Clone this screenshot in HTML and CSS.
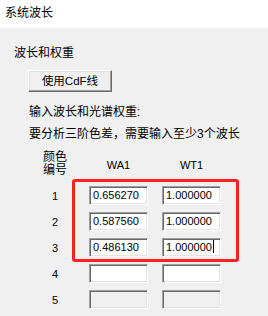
FILE: index.html
```html
<!DOCTYPE html>
<html>
<head>
<meta charset="utf-8">
<link rel="stylesheet" href="styles.css">
</head>
<body>
<div class="page">
  <div class="titlebar">系统波长</div>
  <div class="content">
    <div class="group-title">波长和权重</div>
    <div class="btn">使用CdF线</div>
    <div class="line line1">输入波长和光谱权重:</div>
    <div class="line line2">要分析三阶色差，需要输入至少3个波长</div>
    <div class="table">
      <div class="hdr-label">颜色<br>编号</div>
      <div class="hdr">WA1</div>
      <div class="hdr">WT1</div>

      <div class="num">1</div>
      <div class="field">0.656270</div>
      <div class="field">1.000000</div>

      <div class="num">2</div>
      <div class="field">0.587560</div>
      <div class="field">1.000000</div>

      <div class="num">3</div>
      <div class="field">0.486130</div>
      <div class="field">1.000000<span class="caret"></span></div>

      <div class="num">4</div>
      <div class="field"></div>
      <div class="field"></div>

      <div class="num">5</div>
      <div class="field disabled"></div>
      <div class="field disabled"></div>
    </div>
  </div>
  <div class="highlight"></div>
</div>
</body>
</html>
```
FILE: styles.css
```css
html, body {
  margin: 0;
  padding: 0;
}
body {
  width: 268px;
  height: 316px;
  overflow: hidden;
  background: #f0f0f0;
  font-family: "Liberation Sans", "Noto Sans CJK SC", sans-serif;
  font-size: 12px;
  color: #000;
}
.page {
  position: relative;
  height: 316px;
}
.titlebar {
  height: 28px;
  box-sizing: border-box;
  background: #fff;
  padding: 6px 0 0 5px;
  line-height: 14px;
}
.content {
  padding: 18px 0 0 14px;
}
.group-title {
  line-height: 14px;
}
.btn {
  margin-top: 10px;
  margin-left: 14px;
  width: 84px;
  height: 22px;
  box-sizing: border-box;
  background: #f0f0f0;
  border-top: 1px solid #fff;
  border-left: 1px solid #fff;
  border-right: 1px solid #696969;
  border-bottom: 1px solid #696969;
  box-shadow: inset -1px -1px 0 #a0a0a0, inset 1px 1px 0 #e3e3e3;
  font-size: 11.5px;
  line-height: 20px;
  text-align: center;
}
.line {
  padding-left: 15px;
  line-height: 14px;
}
.line1 {
  margin-top: 13px;
}
.line2 {
  margin-top: 8px;
}
.table {
  margin-top: 10px;
  margin-left: 21px;
  display: grid;
  grid-template-columns: 40px 59px 59px;
  column-gap: 14px;
  row-gap: 7px;
  align-items: center;
}
.hdr-label {
  line-height: 13px;
  text-align: center;
  margin-bottom: 2px;
}
.hdr {
  font-size: 11px;
  text-align: center;
  color: #000;
}
.num {
  font-size: 11px;
  text-align: center;
}
.field {
  height: 19px;
  box-sizing: border-box;
  background: #fff;
  border-top: 1px solid #a0a0a0;
  border-left: 1px solid #a0a0a0;
  border-right: 1px solid #fff;
  border-bottom: 1px solid #fff;
  box-shadow: inset 1px 1px 0 #696969, inset -1px -1px 0 #e3e3e3;
  font-size: 11px;
  line-height: 17px;
  padding-left: 3px;
  white-space: nowrap;
}
.field.disabled {
  background: #f0f0f0;
}
.caret {
  display: inline-block;
  width: 1px;
  height: 13px;
  background: #000;
  vertical-align: -2px;
  margin-left: 1px;
}
.highlight {
  position: absolute;
  left: 72px;
  top: 179px;
  width: 167px;
  height: 83px;
  box-sizing: border-box;
  border: 3px solid #ff2020;
  border-radius: 3px;
}
```
